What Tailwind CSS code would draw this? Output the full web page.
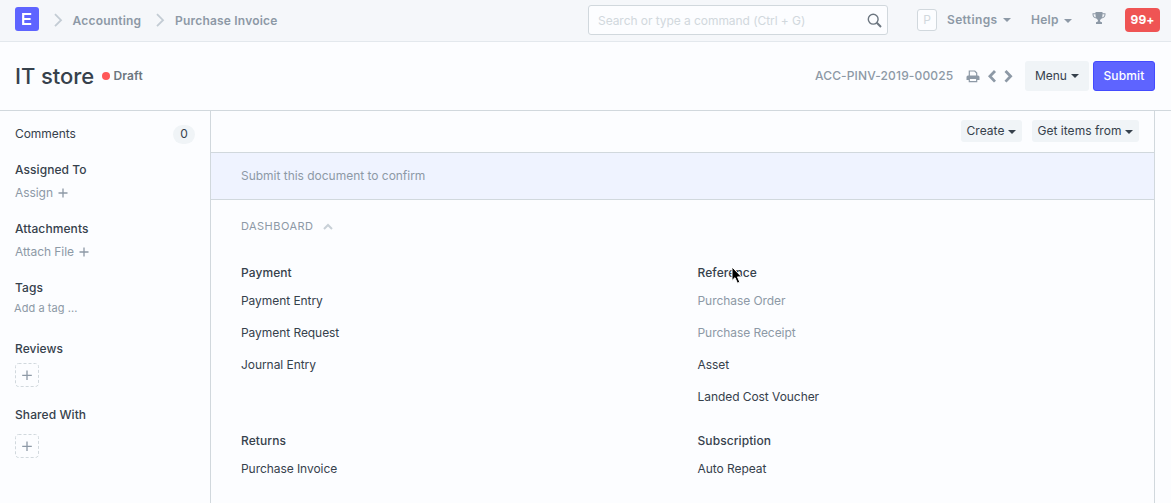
<!DOCTYPE html>
<html lang="en">
<head>
<meta charset="utf-8">
<title>IT store</title>
<script src="https://cdn.jsdelivr.net/npm/@tailwindcss/browser@4"></script>
</head>
<body class="w-[1171px] h-[503px] overflow-hidden bg-[#fcfdff] font-[Inter,sans-serif] text-xs leading-4 tracking-[-0.06px] text-[#36414c] flex flex-col">
<header class="h-[42px] shrink-0 bg-[#f5f7fa] border-b border-[#e3e8ed] flex items-start text-[#8d99a6] font-semibold">
  <svg class="ml-[15px] mt-[7px]" width="24" height="24"><rect width="24" height="24" rx="3" fill="#5e64ff"/><path d="M8 7H16.2M8 12H15.6M8 17H16.2M8.2 6V18" stroke="#fff" stroke-width="2.2" fill="none"/></svg>
  <svg class="ml-[15px] mt-[13px]" width="9" height="15" fill="none" stroke="#c3ccd4" stroke-width="1.8"><path d="M1 1.2L7 7.2L1 13.2"/></svg>
  <span class="ml-[9.500px] mt-[13px] w-[69.500px] whitespace-nowrap tracking-[0.2px]">Accounting</span>
  <svg class="ml-[14px] mt-[13px]" width="9" height="15" fill="none" stroke="#c3ccd4" stroke-width="1.8"><path d="M1 1.2L7 7.2L1 13.2"/></svg>
  <span class="ml-[10px] mt-[13px] whitespace-nowrap tracking-[0.2px]">Purchase Invoice</span>
  <div class="ml-auto mt-[5px] w-[300px] h-[30px] border border-[#d1d8dd] rounded-[3px] bg-[#fcfdff] flex items-center justify-between pl-[9px] pr-[5px] font-normal text-[#d1d8dd]">
    <span class="pt-[2px]">Search or type a command (Ctrl + G)</span>
    <svg width="15" height="15" fill="none" stroke="#6c7680"><circle cx="6.2" cy="6.2" r="4.9" stroke-width="1.4"/><path d="M9.8 9.8L14 14" stroke-width="2"/></svg>
  </div>
  <div class="ml-[29px] mt-[9px] w-[20px] h-[22px] border border-[#d1d8dd] rounded-[3px] bg-[#fcfdff] flex items-center justify-center font-normal text-[#d1d8dd]">P</div>
  <span class="ml-[10px] mt-[12px] w-[52px] whitespace-nowrap tracking-[0.36px]">Settings</span>
  <svg class="ml-[4px] mt-[18px]" width="8" height="4" fill="#8d99a6"><path d="M0 0H8L4 4Z"/></svg>
  <span class="ml-[20px] mt-[12px] w-[28px] tracking-[0.24px]">Help</span>
  <svg class="ml-[5px] mt-[19px]" width="8" height="4" fill="#8d99a6"><path d="M0 0H8L4 4Z"/></svg>
  <svg class="ml-[20px] mt-[12px]" width="14" height="13" fill="#8d99a6"><path d="M3.5 0H10.5V1.2H13.5V2.5C13.5 4.8 11.8 6.2 9.6 6.6C9 7.5 8 7.9 8 8.7C8 9.7 8.8 9.8 10 10.3V12H4V10.3C5.200 9.8 6 9.7 6 8.7C6 7.900 5 7.500 4.400 6.600C2.200 6.200 .5 4.800 .5 2.500V1.200H3.500ZM1.500 2.200C1.500 4 2.500 5.100 3.900 5.500C3.600 4.500 3.500 3.400 3.500 2.200ZM12.500 2.200H10.500C10.500 3.400 10.400 4.500 10.100 5.500C11.500 5.100 12.500 4 12.500 2.200Z"/></svg>
  <div class="ml-[19px] mr-[11px] mt-[8px] w-[35px] h-[24px] rounded-[4px] bg-[#ef5454] text-white flex items-center justify-center font-bold tracking-[0.1px]">99+</div>
</header>
<section class="h-[69px] shrink-0 border-b border-[#d1d8dd] flex items-center pl-[15px] pr-4">
  <h1 class="text-[22px] leading-7 font-medium w-[87px] whitespace-nowrap tracking-[-0.05px]">IT store</h1>
  <span class="size-2 rounded-full bg-[#ff5858]"></span>
  <span class="ml-[3.500px] font-semibold text-[#6c7680] tracking-[0.12px]">Draft</span>
  <span class="ml-auto w-[151px] font-medium text-[#8d99a6] whitespace-nowrap tracking-[0.14px]">ACC-PINV-2019-00025</span>
  <svg width="14" height="13" viewBox="0 0 14 13" fill="none" stroke="#8d99a6"><path d="M3.300 6V1H8.800L10.700 3V6" stroke-width="1.200"/><path d="M.5 10V7Q.5 5.500 2 5.500H12Q13.500 5.500 13.500 7V10H11V8.500H3V10Z" fill="#8d99a6" stroke="none"/><path d="M3.300 8.500V11.600H10.700V8.500Z" stroke-width="1.200"/></svg>
  <svg class="ml-[8px]" width="9" height="13" fill="none" stroke="#8d99a6" stroke-width="2.800"><path d="M7 1L1.900 6.300L7 11.600"/></svg>
  <svg class="ml-[7px]" width="9" height="13" fill="none" stroke="#8d99a6" stroke-width="2.800"><path d="M1.500 1L6.600 6.300L1.500 11.600"/></svg>
  <button class="ml-[12px] w-[64px] h-[30px] rounded-[3px] bg-[#f0f4f7] flex items-center justify-center gap-1 tracking-[-0.06px]">Menu<svg width="8" height="4" fill="#36414c"><path d="M0 0H8L4 4Z"/></svg></button>
  <button class="ml-[4px] w-[62px] h-[30px] rounded-[3px] bg-[#5e64ff] border border-[#444bff] text-white font-medium tracking-[0.16px]">Submit</button>
</section>
<div class="flex flex-1 min-h-0">
  <aside class="w-[210px] pl-[15px] pt-[13px] pr-[15px] shrink-0">
    <div class="flex justify-between h-5 items-center"><span>Comments</span><span class="w-[22px] h-[19px] rounded-full bg-[#f0f4f7] flex items-center justify-center">0</span></div>
    <h2 class="mt-[18px] font-medium tracking-[0.06px]">Assigned To</h2>
    <div class="mt-[7px] text-[#8d99a6] flex items-center gap-[5px]">Assign<svg width="10" height="10" stroke="#8d99a6" stroke-width="1.300"><path d="M5 .5V9.500M.5 5H9.500"/></svg></div>
    <h2 class="mt-[20px] font-medium tracking-[0.1px]">Attachments</h2>
    <div class="mt-[7px] text-[#8d99a6] flex items-center gap-[5px]">Attach File<svg width="10" height="10" stroke="#8d99a6" stroke-width="1.300"><path d="M5 .5V9.500M.5 5H9.500"/></svg></div>
    <h2 class="mt-[20px] font-medium tracking-[0.06px]">Tags</h2>
    <div class="mt-[4px] -ml-px text-[11px] text-[#8d99a6] tracking-[0.07px]">Add a tag ...</div>
    <h2 class="mt-[25px] font-medium tracking-[0.06px]">Reviews</h2>
    <svg class="mt-[6px]" width="24" height="24" fill="none" stroke="#8d99a6"><rect x=".5" y=".5" width="23" height="23" rx="3" stroke="#d1d8dd" stroke-dasharray="3 2"/><path d="M12 7.500V17M7.200 12.300H16.800" stroke-width="1.300"/></svg>
    <h2 class="mt-[20px] font-medium tracking-[0.08px]">Shared With</h2>
    <svg class="mt-[11px]" width="24" height="24" fill="none" stroke="#8d99a6"><rect x=".5" y=".5" width="23" height="23" rx="3" stroke="#d1d8dd" stroke-dasharray="3 2"/><path d="M12 7.500V17M7.200 12.300H16.800" stroke-width="1.300"/></svg>
  </aside>
  <main class="w-[945px] border-x border-[#d1d8dd] shrink-0">
    <div class="h-[41px] flex justify-end items-start pt-[9px] pr-[15px] gap-[10px]">
      <button class="w-[61px] h-[22px] rounded-[3px] bg-[#f0f4f7] flex items-center justify-center gap-1 tracking-[0.02px]">Create<svg class="mt-px" width="8" height="4" fill="#36414c"><path d="M0 0H8L4 4Z"/></svg></button>
      <button class="w-[107px] h-[22px] rounded-[3px] bg-[#f0f4f7] flex items-center justify-center gap-1 tracking-[0.02px]">Get items from<svg class="mt-px" width="8" height="4" fill="#36414c"><path d="M0 0H8L4 4Z"/></svg></button>
    </div>
    <div class="h-[48px] border-y border-[#d1d8dd] bg-[#eff3ff] pl-[30px] flex items-center text-[#8d99a6] tracking-[-0.02px]">Submit this document to confirm</div>
    <div class="pl-[30px] pt-[18px]">
      <div class="text-[11px] text-[#8d99a6] flex items-center gap-[10px] tracking-[0.46px]">DASHBOARD<svg width="10" height="7" fill="none" stroke="#c8d0d7" stroke-width="2"><path d="M1 6L5 2L9 6"/></svg></div>
      <div class="mt-[31px] h-[168px] flex">
        <div class="w-[456.500px] flex flex-col gap-4"><h3 class="font-medium -mb-1 tracking-[0.08px]">Payment</h3><a>Payment Entry</a><a>Payment Request</a><a>Journal Entry</a></div>
        <div class="relative flex flex-col gap-4"><h3 class="font-medium -mb-1 tracking-[0.08px]">Reference</h3><a class="text-[#8d99a6]">Purchase Order</a><a class="text-[#8d99a6]">Purchase Receipt</a><a>Asset</a><a>Landed Cost Voucher</a>
          <svg class="absolute left-[33.500px] top-px" width="13" height="19" fill="#000" stroke="#fff" stroke-width="1"><path d="M1 1V14.500L4 11.700L6.400 17.200L8.800 16.200L6.500 10.900H10.600Z"/></svg>
        </div>
      </div>
      <div class="flex">
        <div class="w-[456.500px] flex flex-col gap-4"><h3 class="font-medium -mb-1 tracking-[0.08px]">Returns</h3><a>Purchase Invoice</a></div>
        <div class="flex flex-col gap-4"><h3 class="font-medium -mb-1 tracking-[0.08px]">Subscription</h3><a>Auto Repeat</a></div>
      </div>
    </div>
  </main>
</div>
</body>
</html>
